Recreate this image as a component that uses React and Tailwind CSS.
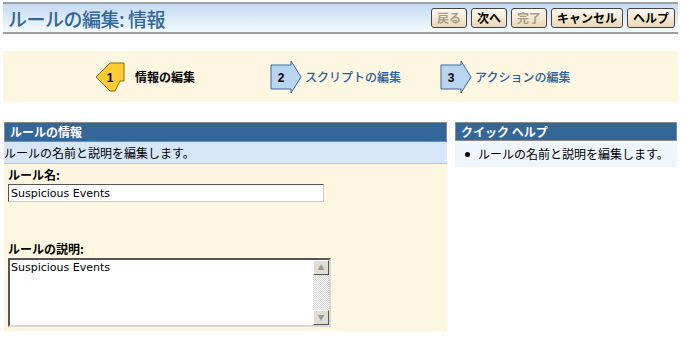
import React from 'react';

const font = { fontFamily: '"Noto Sans CJK JP", "Liberation Sans", sans-serif' };

function ToolButton({ label, disabled }) {
  return (
    <button
      type="button"
      className={`h-[20px] px-[5px] border border-[#444] rounded-[3px] bg-gradient-to-b from-[#fffaf0] to-[#ead8b8] text-[12px] leading-none font-bold ${disabled ? 'text-[#a89c88]' : 'text-black'}`}
    >
      {label}
    </button>
  );
}

function StepOne() {
  return (
    <svg width="32" height="32" viewBox="0 0 32 32">
      <polygon points="1,16 15,2 29,2 29,20 25,20 20,30 15,30" fill="#ffcc33" stroke="#8a6a10" strokeWidth="1" />
      <text x="15" y="21" fontSize="12" fontWeight="bold" textAnchor="middle" fontFamily="Liberation Sans, sans-serif" fill="#000">1</text>
    </svg>
  );
}

function StepArrow({ n }) {
  return (
    <svg width="32" height="34" viewBox="0 0 32 34">
      <polygon points="1,5 21,5 21,1 31,17 21,33 21,29 1,29" fill="#b9d5f0" stroke="#3a6a9c" strokeWidth="1" />
      <text x="11" y="22" fontSize="12" fontWeight="bold" textAnchor="middle" fontFamily="Liberation Sans, sans-serif" fill="#000">{n}</text>
    </svg>
  );
}

export default function App() {
  return (
    <div className="w-[681px] h-[348px] bg-white overflow-hidden" style={font}>
      <div className="mx-[3px] mt-[2px] h-[32px] border-t-2 border-b-2 border-[#a0a0a0] bg-gradient-to-b from-[#c4daf2] to-[#f3fbff] flex items-center justify-between pl-[5px] pr-[3px]">
        <h1 className="text-[19px] leading-none font-medium text-[#336699] tracking-[-0.5px]">ルールの編集: 情報</h1>
        <div className="flex gap-[4px]">
          <ToolButton label="戻る" disabled />
          <ToolButton label="次へ" />
          <ToolButton label="完了" disabled />
          <ToolButton label="キャンセル" />
          <ToolButton label="ヘルプ" />
        </div>
      </div>

      <div className="mx-[3px] mt-[17px] h-[51px] bg-[#fdf7e1] flex items-center pl-[92px]">
        <div className="flex items-center gap-[8px] w-[175px]">
          <StepOne />
          <span className="text-[12px] font-bold text-black">情報の編集</span>
        </div>
        <div className="flex items-center gap-[3px] w-[170px]">
          <StepArrow n="2" />
          <span className="text-[12px] font-medium text-[#2b5f97]">スクリプトの編集</span>
        </div>
        <div className="flex items-center gap-[3px]">
          <StepArrow n="3" />
          <span className="text-[12px] font-medium text-[#2b5f97]">アクションの編集</span>
        </div>
      </div>

      <div className="flex gap-[8px] mt-[20px] ml-[4px] mr-[4px]">
        <div className="w-[443px]">
          <div className="h-[20px] bg-[#336699] border border-[#8a8a8a] text-white text-[12px] font-bold flex items-center pl-[5px]">ルールの情報</div>
          <div className="h-[22px] bg-[#d6e6f7] border-b border-[#a9cdee] text-[12px] text-black flex items-center">ルールの名前と説明を編集します。</div>
          <div className="bg-[#fdf7e2] h-[167px] pl-[4px] pt-[4px]">
            <div className="text-[12px] font-bold text-black leading-[14px]">ルール名:</div>
            <input
              readOnly
              value="Suspicious Events"
              className="block mt-[2px] w-[316px] h-[18px] bg-white border border-[#c8c8c8] border-t-[#555] border-l-[#555] text-[11px] px-[2px] outline-none"
              style={{ fontFamily: '"DejaVu Sans", sans-serif' }}
            />
            <div className="mt-[40px] text-[12px] font-bold text-black leading-[14px]">ルールの説明:</div>
            <div className="mt-[2px] w-[323px] h-[69px] bg-white border-2 border-[#d8d8d8] border-t-[#555] border-l-[#555] flex">
              <div className="flex-1 text-[11px] leading-[14px] pl-[1px] pt-[1px]" style={{ fontFamily: '"DejaVu Sans", sans-serif' }}>Suspicious Events</div>
              <div className="w-[16px] flex flex-col bg-[repeating-conic-gradient(#d4d4d4_0%_25%,#ffffff_0%_50%)] bg-[length:2px_2px]">
                <div className="h-[15px] bg-[#e0ddd4] border border-[#fff] border-r-[#555] border-b-[#555] flex items-center justify-center text-[7px] text-[#999]">▲</div>
                <div className="flex-1" />
                <div className="h-[15px] bg-[#e0ddd4] border border-[#fff] border-r-[#555] border-b-[#555] flex items-center justify-center text-[7px] text-[#999]">▼</div>
              </div>
            </div>
          </div>
        </div>

        <div className="flex-1">
          <div className="h-[19px] bg-[#336699] border border-[#8a8a8a] text-white text-[12px] font-bold flex items-center pl-[5px]">クイック ヘルプ</div>
          <div className="h-[26px] bg-[#eef5fd] text-[12px] text-black flex items-center pl-[10px] gap-[8px]">
            <span className="w-[5px] h-[5px] rounded-full bg-black" />
            <span>ルールの名前と説明を編集します。</span>
          </div>
        </div>
      </div>
    </div>
  );
}
